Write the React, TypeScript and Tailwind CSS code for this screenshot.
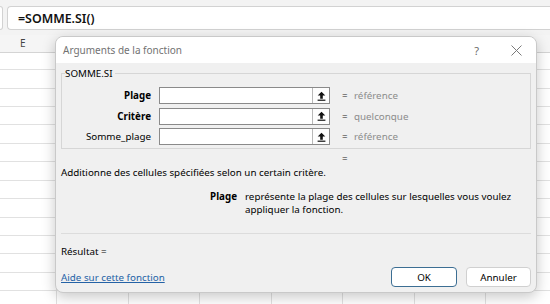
import { ReactNode } from "react";

const rowHeights = [17, 19, 18, 18, 19, 18, 19, 18, 19, 18, 18, 19, 18, 18];
const colWidths = [57, 72, 71, 72, 71, 72, 71, 71];

function UploadIcon(): ReactNode {
  return (
    <svg width="9" height="10" viewBox="0 0 9 10">
      <path d="M4.5 0.8 L8.3 4.6 L5.8 4.6 L5.8 7.8 L3.2 7.8 L3.2 4.6 L0.7 4.6 Z" fill="#111" />
      <rect x="0.6" y="8.6" width="7.8" height="1.2" fill="#111" />
    </svg>
  );
}

interface ArgRowProps {
  label: string,
  bold?: boolean,
  value: string,
}

function ArgRow({ label, bold, value }: ArgRowProps): ReactNode {
  return (
    <div className="flex items-center h-[17px]">
      <div className={`w-[89px] text-right text-black ${bold ? "font-bold" : ""}`}>{label}</div>
      <div className="ml-[8px] w-[171px] h-[17px] bg-white border border-[#8a8a8a] flex justify-end">
        <div className="w-[17px] h-full border-l border-[#b8b8b8] bg-[#fdfdfd] flex items-center justify-center">
          <UploadIcon />
        </div>
      </div>
      <div className="ml-[12px] w-[12px] text-[#222]">=</div>
      <div className="text-[#8c8c8c]">{value}</div>
    </div>
  );
}

function FunctionDialog(): ReactNode {
  return (
    <div className="absolute left-[55px] top-[36px] w-[482px] h-[257px] rounded-[8px] bg-[#f0f0f0] border border-[#c9c9c9] shadow-[0_4px_14px_rgba(0,0,0,0.22)] overflow-hidden flex flex-col">
      <div className="h-[26px] bg-white flex items-center pl-[7px] shrink-0">
        <span className="text-[#727272] text-[10px]">Arguments de la fonction</span>
        <span className="ml-auto text-[#6a6a6a] text-[11px]">?</span>
        <svg className="ml-[32px] mr-[14px]" width="11" height="11" viewBox="0 0 11 11">
          <path d="M0.5 0.5 L10.5 10.5 M10.5 0.5 L0.5 10.5" stroke="#7a7a7a" strokeWidth="1" />
        </svg>
      </div>

      <div className="px-[5px] flex flex-col">
        <div className="relative mt-[10px] h-[76px] border border-[#d6d6d6] pt-[13px] flex flex-col gap-[3.5px]">
          <span className="absolute left-[3px] -top-[7px] bg-[#f0f0f0] pr-[2px] text-black">SOMME.SI</span>
          <ArgRow label="Plage" bold value="référence" />
          <ArgRow label="Critère" bold value="quelconque" />
          <ArgRow label="Somme_plage" value="référence" />
        </div>

        <div className="mt-[3px] h-[13px] pl-[281px] text-[#222]">=</div>
        <div className="mt-[1px] h-[13px] text-black">Additionne des cellules spécifiées selon un certain critère.</div>

        <div className="mt-[11px] flex text-black">
          <div className="w-[176px] text-right font-bold">Plage</div>
          <div className="ml-[8px] w-[275px]">représente la plage des cellules sur lesquelles vous voulez appliquer la fonction.</div>
        </div>

        <div className="mt-[17px] h-px bg-[#dcdcdc]" />

        <div className="mt-[11px] h-[13px] text-black">Résultat =</div>

        <div className="mt-[9px] flex items-center h-[20px]">
          <span className="text-[#2462a6] underline">Aide sur cette fonction</span>
          <button className="ml-auto w-[66px] h-[20px] rounded-[4px] bg-white border border-[#3c6e93] text-black">OK</button>
          <button className="ml-[9px] w-[65px] h-[20px] rounded-[4px] bg-white border border-[#d0d0d0] text-black">Annuler</button>
        </div>
      </div>
    </div>
  );
}

export default function App(): ReactNode {
  return (
    <div className="relative w-[550px] h-[304px] overflow-hidden bg-white text-[9.8px] leading-[13px] font-['Noto_Sans','Open_Sans',sans-serif]">
      <div className="h-[35px] bg-[#f3f3f3] pt-[6px] flex">
        <div className="w-[3px] h-[24px] bg-white border border-l-0 border-[#d2d2d2] rounded-r-[4px]" />
        <div className="ml-[4px] flex-1 h-[24px] bg-white border border-r-0 border-[#d2d2d2] rounded-l-[4px] flex items-center pl-[10px]">
          <span className="text-[12.4px] font-semibold text-[#111]">=SOMME.SI()</span>
        </div>
      </div>

      <div className="h-[18px] bg-[#f5f5f5] border-b border-[#d4d4d4] flex items-center">
        <span className="ml-[20px] text-[10px] text-[#444]">E</span>
      </div>

      {rowHeights.map((h: number, i: number): ReactNode => {
        return (
          <div key={i} className="flex border-b border-[#e1e1e1]" style={{ height: h }}>
            {colWidths.map((w: number, j: number): ReactNode => {
              return <div key={j} className="h-full border-r border-[#e1e1e1] shrink-0" style={{ width: w }} />
            })}
          </div>
        )
      })}

      <FunctionDialog />
    </div>
  );
}
